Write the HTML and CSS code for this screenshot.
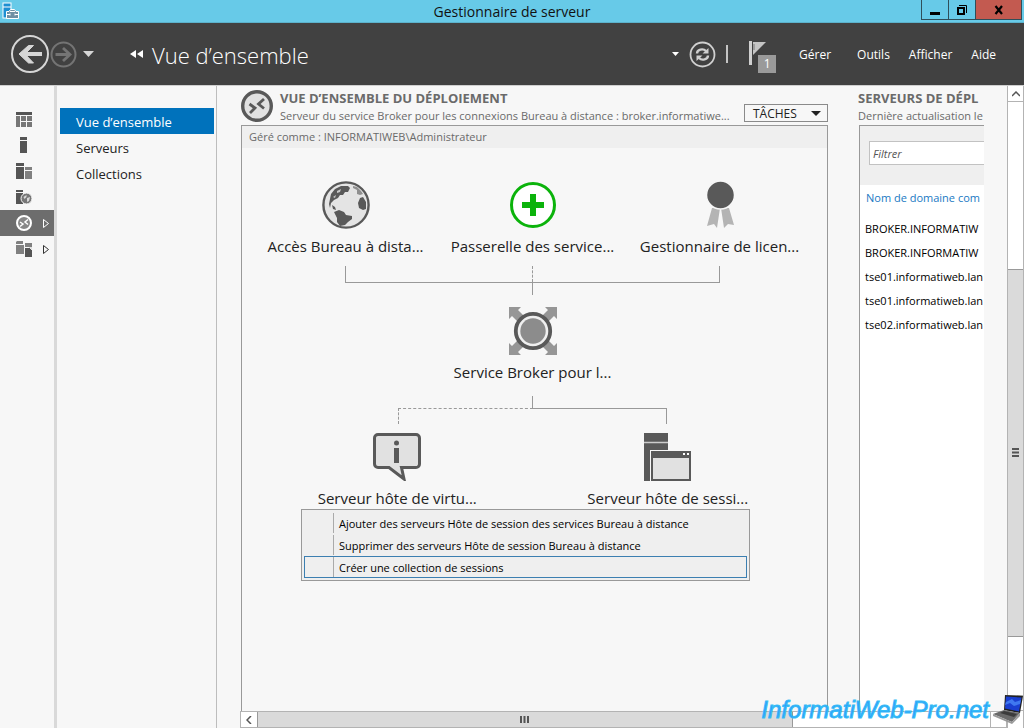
FILE: index.html
```html
<!DOCTYPE html>
<html lang="fr">
<head>
    <meta charset="UTF-8">
    <meta name="viewport" content="width=device-width, initial-scale=1.0">
    <title>Gestionnaire de serveur</title>
    <link rel="stylesheet" href="styles.css">
</head>
<body>
    <header class="titlebar">
        <svg class="app-icon" width="18" height="18" viewBox="0 0 18 18">
            <rect x="1" y="1" width="8" height="15" fill="#1b8fd2" stroke="#fff"/>
            <path d="M1 5h8" stroke="#fff"/>
            <path d="M4.500 9.500h2.500l1.500-2h4l1.500 2h2.500v7h-12z" fill="#6f8fa3" stroke="#fff"/>
            <path d="M5 12.500h3m5 0h3M8 11.500v2m5-2v2M8 9.500h5" stroke="#fff"/>
        </svg>
        <h1>Gestionnaire de serveur</h1>
        <div class="window-controls">
            <button class="win-btn" aria-label="Réduire">
                <svg width="12" height="12" viewBox="0 0 12 12"><path d="M1 9.500h10" stroke="#000" stroke-width="3"/></svg>
            </button>
            <button class="win-btn" aria-label="Agrandir">
                <svg width="12" height="12" viewBox="0 0 12 12" fill="none" stroke="#000"><path d="M3 1.500h7.500V9"/><rect x="2" y="4" width="6" height="6" stroke-width="2"/></svg>
            </button>
            <button class="win-btn close" aria-label="Fermer">
                <svg width="12" height="12" viewBox="0 0 12 12"><path d="M2.500 2l6.500 8M9 2l-6.500 8" stroke="#000" stroke-width="2.200"/></svg>
            </button>
        </div>
    </header>

    <div class="toolbar">
        <div class="history">
            <button aria-label="Précédent">
                <svg width="40" height="40" viewBox="0 0 40 40" fill="none" stroke="#d6d6d6">
                    <circle cx="20" cy="20" r="18" stroke-width="2"/>
                    <path d="M32 20H11" stroke-width="4"/>
                    <path d="M18.500 11.500h5l-8.500 8.500 8.500 9h-5l-9.500-9z" fill="#d6d6d6" stroke-width="1"/>
                </svg>
            </button>
            <button aria-label="Suivant">
                <svg width="27" height="27" viewBox="0 0 27 27" fill="none" stroke="#747474">
                    <circle cx="13.500" cy="13.500" r="12" stroke-width="2"/>
                    <path d="M5.500 13.500H20M13 7l7 6.500-7 6.500" stroke-width="2.800"/>
                </svg>
            </button>
            <button class="history-more" aria-label="Historique">
                <svg width="11" height="6" viewBox="0 0 11 6"><path d="M0 0h11L5.500 6z" fill="#d6d6d6"/></svg>
            </button>
        </div>
        <div class="breadcrumb">
            <svg width="14" height="8" viewBox="0 0 14 8"><path d="M6 0v8L0 4zM13 0v8L7 4z" fill="#fff"/></svg>
            <h2>Vue d’ensemble</h2>
        </div>
        <div class="actions">
            <svg width="7" height="4" viewBox="0 0 7 4"><path d="M0 0h7L3.500 4z" fill="#fff"/></svg>
            <button class="refresh" aria-label="Actualiser">
                <svg width="27" height="27" viewBox="0 0 27 27" fill="none" stroke="#d0d0d0">
                    <circle cx="13.500" cy="13.500" r="12" stroke-width="1.800"/>
                    <path d="M8 12.500c0-4 6-5.500 9-2.500M19 14.500c0 4-6 5.500-9 2.500" stroke-width="2.400"/>
                    <path d="M19.500 7v5.500h-6zM7.500 20v-5.500h6z" fill="#d0d0d0" stroke="none"/>
                </svg>
            </button>
            <span class="divider"></span>
            <button class="flag" aria-label="Notifications">
                <svg width="20" height="26" viewBox="0 0 20 26"><path d="M0 0h3v24H0z" fill="#d0d0d0"/><path d="M4 1h13L4 14z" fill="#c4c4c4"/><path d="M5 3v6" stroke="#777"/></svg>
                <span class="badge">1</span>
            </button>
            <nav class="menus">
                <button class="menu-manage">Gérer</button>
                <button>Outils</button>
                <button>Afficher</button>
                <button>Aide</button>
            </nav>
        </div>
    </div>

    <div class="workspace">
        <nav class="rail">
            <a href="#" aria-label="Tableau de bord">
                <svg width="16" height="16" viewBox="0 0 16 16"><path d="M0 1h16v3H0z" fill="#555"/><path d="M0 5h4v11H0zM5 5h5v5H5zM11 5h5v5h-5zM5 11h5v5H5zM11 11h5v5h-5z" fill="#777"/></svg>
            </a>
            <a href="#" aria-label="Serveur local">
                <svg width="16" height="16" viewBox="0 0 16 16"><path d="M4 0h7v3H4zM4 4h7v12H4z" fill="#555"/></svg>
            </a>
            <a href="#" aria-label="Tous les serveurs">
                <svg width="16" height="16" viewBox="0 0 16 16"><path d="M0 0h8v3H0zM0 4h8v12H0z" fill="#555"/><path d="M9 4h7v3H9zM9 8h7v8H9z" fill="#808080"/></svg>
            </a>
            <a href="#" aria-label="IIS">
                <svg width="16" height="16" viewBox="0 0 16 16"><path d="M0 1h7v2H0zM0 4h7v11H0z" fill="#555"/><circle cx="10.500" cy="9.500" r="5.500" fill="#777" stroke="#f7f7f7"/><path d="M7.500 8l3-2v2l-2 2zM11 9l3-1-1 4-2 1z" fill="#d8d8d8"/></svg>
            </a>
            <a href="#" class="active" aria-label="Services Bureau à distance">
                <svg width="16" height="16" viewBox="0 0 16 16" fill="none" stroke="#fff"><circle cx="8" cy="8" r="7" fill="#888" stroke-width="2"/><path d="M4 7l3 2-3 2.500M12 4.500L9 7l3 2.500" stroke-width="1.500"/></svg>
                <svg class="expand" width="6" height="9" viewBox="0 0 6 9"><path d="M.5.5v8l5-4z" fill="none" stroke="#fff"/></svg>
            </a>
            <a href="#" aria-label="Services de fichiers">
                <svg width="16" height="16" viewBox="0 0 16 16"><path d="M0 1l1-1h6v3H0zM0 4h8v9H0zM9 2h7v11H9z" fill="#808080"/><path d="M8.500 6.500h5l3 3v7h-8z" fill="#555" stroke="#f7f7f7"/><path d="M13 6h3v3z" fill="#ddd"/></svg>
                <svg class="expand" width="6" height="9" viewBox="0 0 6 9"><path d="M.5.5v8l5-4z" fill="none" stroke="#333"/></svg>
            </a>
        </nav>

        <nav class="sidenav">
            <a href="#" class="active">Vue d’ensemble</a>
            <a href="#">Serveurs</a>
            <a href="#">Collections</a>
        </nav>

        <main class="content">
            <div class="tiles">
                <section class="tile deployment">
                    <div class="tile-head">
                        <svg width="32" height="32" viewBox="0 0 32 32" fill="none" stroke="#595959"><circle cx="16" cy="16" r="14.300" fill="#e1e1e1" stroke-width="3.400"/><path d="M8.500 14l5.500 4-5 5M23 9l-5.500 5 5.500 4.500" stroke-width="2.800"/></svg>
                        <div class="tile-title">
                            <h3>VUE D’ENSEMBLE DU DÉPLOIEMENT</h3>
                            <p>Serveur du service Broker pour les connexions Bureau à distance : broker.informatiwe...</p>
                        </div>
                        <button class="tasks">TÂCHES
                            <svg width="10" height="5" viewBox="0 0 10 5"><path d="M0 0h10L5 5z" fill="#222"/></svg>
                        </button>
                    </div>
                    <div class="panel">
                        <p class="managed">Géré comme : INFORMATIWEB\Administrateur</p>
                        <div class="diagram">
                            <div class="row three">
                                <div class="node">
                                    <svg width="48" height="48" viewBox="0 0 48 48">
                                        <circle cx="24" cy="24" r="22.600" fill="#e4e4e4" stroke="#595959" stroke-width="2.400"/>
                                        <path d="M8 18l1-5 4-5 6-3 7 0 2 2-2 4-3 0-2 3-3 0-2 3-4 2-3 3-1 5-1-4z" fill="#595959"/>
                                        <path d="M10 24l3 2 1 3-3-1zM12 31l5-2 5 2 2 3 6 1 0 3-4 3-3 3-5 1-3-4 0-4z" fill="#595959"/>
                                        <path d="M38 17l3-1 3 5 0 7-3 1-4-2-1-5z" fill="#595959"/>
                                        <path d="M31 5l4 1 4 4 2 3-3 1-3-1 0-4-4-2z" fill="#8f8f8f"/>
                                        <path d="M15 10l4-2-1 3-3 1zM11 16l3-2-1 3z" fill="#c8c8c8"/>
                                    </svg>
                                    <span>Accès Bureau à dista...</span>
                                </div>
                                <div class="node">
                                    <svg width="48" height="48" viewBox="0 0 48 48"><circle cx="24" cy="24" r="21.500" fill="#fff" stroke="#0bb30b" stroke-width="3"/><path d="M24 13v22M13 24h22" stroke="#0bb30b" stroke-width="6"/></svg>
                                    <span>Passerelle des service...</span>
                                </div>
                                <div class="node">
                                    <svg width="48" height="48" viewBox="0 0 48 48"><path d="M16 27h8l-3 20-3-4-7 2zM25 27h8l5 17-6-1-4 4z" fill="#b4b4b4"/><circle cx="24.500" cy="14" r="14" fill="#595959" stroke="#f7f7f7" stroke-width="1.500"/></svg>
                                    <span>Gestionnaire de licen...</span>
                                </div>
                            </div>
                            <div class="join"><span></span></div>
                            <div class="stem"></div>
                            <div class="row">
                                <div class="node">
                                    <svg width="48" height="48" viewBox="0 0 48 48">
                                        <path d="M0 0h12L9 3l8 8-6 6-8-8-3 3zM48 0v12l-3-3-8 8-6-6 8-8-3-3zM0 48V36l3 3 8-8 6 6-8 8 3 3zM48 48H36l3-3-8-8 6-6 8 8 3-3z" fill="#969696"/>
                                        <circle cx="24" cy="24" r="17.200" fill="#efefef" stroke="#595959" stroke-width="3.800"/>
                                        <circle cx="24" cy="24" r="12.700" fill="#8c8c8c"/>
                                    </svg>
                                    <span>Service Broker pour l...</span>
                                </div>
                            </div>
                            <div class="stem"></div>
                            <div class="fork"><span class="optional"></span><span></span></div>
                            <div class="row two">
                                <div class="node">
                                    <svg width="48" height="48" viewBox="0 0 48 48">
                                        <path d="M5 1.500h38a3.500 3.500 0 013.500 3.500v26a3.500 3.500 0 01-3.500 3.500H28.500L31 46 16 34.500H5A3.500 3.500 0 011.500 31V5A3.500 3.500 0 015 1.500z" fill="#e1e1e1" stroke="#595959" stroke-width="3"/>
                                        <circle cx="23.500" cy="10" r="2.500" fill="#595959"/><path d="M21 15h5v15h-5z" fill="#595959"/>
                                    </svg>
                                    <span>Serveur hôte de virtu...</span>
                                </div>
                                <div class="node">
                                    <svg width="48" height="48" viewBox="0 0 48 48">
                                        <path d="M0 0h24v48H0z" fill="#595959"/><path d="M0 9.500h24" stroke="#ccc" stroke-width="1.500"/>
                                        <path d="M6 17h42v31H6z" fill="#f7f7f7"/><path d="M7 18h40v30H7z" fill="#595959"/><path d="M9 25h36v21H9z" fill="#e1e1e1"/><path d="M39 20h2v2h-2zM43 20h2v2h-2z" fill="#fff"/>
                                    </svg>
                                    <span>Serveur hôte de sessi...</span>
                                </div>
                            </div>
                            <div class="context-menu" role="menu">
                                <button role="menuitem"><span>Ajouter des serveurs Hôte de session des services Bureau à distance</span></button>
                                <button role="menuitem"><span>Supprimer des serveurs Hôte de session Bureau à distance</span></button>
                                <button role="menuitem" class="focused"><span>Créer une collection de sessions</span></button>
                            </div>
                        </div>
                    </div>
                </section>

                <section class="tile servers">
                    <div class="tile-head">
                        <div class="tile-title">
                            <h3>SERVEURS DE DÉPL</h3>
                            <p>Dernière actualisation le</p>
                        </div>
                    </div>
                    <div class="server-panel">
                        <div class="filter">
                            <input type="text" placeholder="Filtrer" aria-label="Filtrer">
                        </div>
                        <table>
                            <thead>
                                <tr><th>Nom de domaine com</th></tr>
                            </thead>
                            <tbody>
                                <tr><td>BROKER.INFORMATIW</td></tr>
                                <tr><td>BROKER.INFORMATIW</td></tr>
                                <tr><td>tse01.informatiweb.lan</td></tr>
                                <tr><td>tse01.informatiweb.lan</td></tr>
                                <tr><td>tse02.informatiweb.lan</td></tr>
                            </tbody>
                        </table>
                    </div>
                </section>
            </div>

            <div class="hscroll">
                <button aria-label="Gauche"><svg width="6" height="8" viewBox="0 0 6 8"><path d="M5 0L1 4l4 4" fill="none" stroke="#555" stroke-width="1.500"/></svg></button>
                <div class="thumb"><svg width="9" height="7" viewBox="0 0 9 7"><path d="M1 0v7M4.500 0v7M8 0v7" stroke="#555" stroke-width="2"/></svg></div>
                <div class="rest"></div>
                <button aria-label="Droite"></button>
            </div>
        </main>

        <div class="vscroll">
            <button aria-label="Haut"><svg width="8" height="6" viewBox="0 0 8 6"><path d="M0 5l4-4 4 4" fill="none" stroke="#555" stroke-width="1.500"/></svg></button>
            <div class="before"></div>
            <div class="thumb"><svg width="7" height="9" viewBox="0 0 7 9"><path d="M0 1h7M0 4.500h7M0 8h7" stroke="#555" stroke-width="2"/></svg></div>
            <div class="after"></div>
            <button aria-label="Bas"></button>
        </div>
    </div>

    <div class="watermark">
        <span>InformatiWeb-Pro.net</span>
        <svg width="32" height="30" viewBox="0 0 32 30">
            <path d="M13 0l18 1-3 17-16-3z" fill="#222"/>
            <path d="M14 1.500l15.500 1-2.500 14-14-3z" fill="#1a3fd0"/>
            <path d="M14 7l6-3 3 3 6-2-1 4-6 2-4-3-5 2z" fill="#3f78f0"/>
            <path d="M12 15l16 3-8 9L1 19z" fill="#6a6a6a"/>
            <path d="M12 16l13 3-3 3-14-4z" fill="#3b3b3b"/>
            <path d="M1 19l19 8v2L1 21zM28 18l-8 9v2l8-8z" fill="#999"/>
        </svg>
    </div>
</body>
</html>
```
FILE: styles.css
```css
* {
    margin: 0;
    padding: 0;
    box-sizing: border-box;
}

body {
    display: flex;
    flex-direction: column;
    min-height: 100vh;
    font-family: "Open Sans", "Noto Sans", sans-serif;
    font-size: 12px;
    color: #222;
    background: #f7f7f7;
    overflow-x: hidden;
    position: relative;
}

button {
    font: inherit;
    color: inherit;
    background: none;
    border: none;
    cursor: pointer;
}

a {
    color: inherit;
    text-decoration: none;
}

svg {
    display: block;
    flex: none;
}

/* Title bar */
.titlebar {
    display: grid;
    grid-template-columns: 1fr auto 1fr;
    height: 23px;
    background: #67cae8;
    border-bottom: 1px solid #5cb2cc;
}

.app-icon {
    margin: 2px 0 0 2px;
}

.titlebar h1 {
    font-size: 14px;
    font-weight: 400;
    line-height: 24px;
    color: #111;
}

.window-controls {
    display: flex;
    justify-self: end;
    height: 20px;
    margin-right: 2px;
    border: 1px solid #2f4f5a;
    border-top: none;
}

.win-btn {
    display: flex;
    align-items: center;
    justify-content: center;
    width: 27px;
    border-right: 1px solid #2f4f5a;
}

.win-btn.close {
    width: 45px;
    background: #c35a50;
    border-right: none;
}

/* Toolbar */
.toolbar {
    display: flex;
    align-items: center;
    height: 62px;
    background: #414141;
    color: #fff;
}

.history {
    display: flex;
    align-items: center;
    padding-left: 10px;
}

.history-more {
    margin-left: 6px;
}

.breadcrumb {
    display: flex;
    align-items: center;
    gap: 8px;
    margin-left: 36px;
}

.breadcrumb h2 {
    padding-top: 2px;
    font-size: 22px;
    font-weight: 300;
    line-height: 32px;
}

.actions {
    display: flex;
    align-items: center;
    margin-left: auto;
}

.refresh {
    margin: 0 10px;
}

.divider {
    width: 2px;
    height: 18px;
    background: #c4c4c4;
}

.flag {
    position: relative;
    height: 28px;
    width: 28px;
    margin-left: 21px;
}

.badge {
    position: absolute;
    left: 9px;
    top: 15px;
    width: 18px;
    height: 18px;
    background: #9a9a9a;
    line-height: 18px;
}

.menus {
    display: flex;
    gap: 19px;
    padding-right: 28px;
    margin-left: 22px;
}

.menu-manage {
    margin-right: 7px;
}

/* Workspace */
.workspace {
    display: flex;
    flex: 1;
    border-top: 1px solid #cfcfcf;
}

.rail {
    width: 57px;
    padding-top: 20px;
    border-right: 3px solid #d9d9d9;
}

.rail a {
    display: flex;
    align-items: center;
    height: 26px;
    padding-left: 16px;
}

.rail .active {
    background: #6d6d6d;
}

.expand {
    margin-left: 11px;
}

.sidenav {
    width: 160px;
    padding: 22px 2px 0 3px;
    border-right: 1px solid #bdbdbd;
}

.sidenav a {
    display: block;
    height: 26px;
    padding-left: 16px;
    font-size: 13px;
    line-height: 28px;
}

.sidenav .active {
    color: #fff;
    background: #0072bc;
}

.content {
    display: flex;
    flex: 1;
    flex-direction: column;
    min-width: 0;
    padding-left: 23px;
}

.tiles {
    display: flex;
    flex: 1;
    gap: 30px;
    padding: 0 23px 0 1px;
}

.tile {
    display: flex;
    flex-direction: column;
}

.deployment {
    flex: 1;
    min-width: 0;
}

.servers {
    flex: 0 0 126px;
    overflow: hidden;
    white-space: nowrap;
}

.tile-head {
    display: flex;
    align-items: flex-start;
    gap: 7px;
    height: 39px;
    padding-top: 4px;
    color: #6a6a6a;
}

.tile-title {
    flex: 1;
    min-width: 0;
    white-space: nowrap;
}

.tile-title h3 {
    font-size: 13px;
    line-height: 17px;
}

.tile-title p {
    font-size: 11px;
    line-height: 17px;
}

.tasks {
    display: flex;
    align-items: center;
    justify-content: space-between;
    align-self: flex-end;
    width: 84px;
    height: 18px;
    padding: 0 6px 0 8px;
    margin-bottom: 3px;
    border: 1px solid #8a8a8a;
    color: #222;
}

.panel {
    flex: 1;
    border: 1px solid #999;
    border-bottom: none;
}

.managed {
    padding-left: 7px;
    font-size: 11px;
    line-height: 22px;
    color: #6a6a6a;
    background: #efefef;
}

/* Deployment diagram */
.diagram {
    position: relative;
    padding: 33px 14px 0 10px;
}

.row {
    display: grid;
}

.three {
    grid-template-columns: repeat(3, 1fr);
}

.two {
    grid-template-columns: repeat(2, 1fr);
    padding: 0 10px;
}

.node {
    display: flex;
    flex-direction: column;
    align-items: center;
    gap: 6px;
    font-size: 15px;
    line-height: 22px;
    white-space: nowrap;
}

.join {
    display: flex;
    justify-content: center;
    height: 17px;
    margin: 9px 16.66% 0;
    border: 1px solid #999;
    border-top: none;
}

.join span {
    border-left: 1px dashed #999;
}

.stem {
    width: 1px;
    height: 12px;
    margin: 0 auto;
    background: #999;
}

.stem + .row {
    margin-top: 12px;
}

.row + .stem {
    margin-top: 13px;
}

.fork {
    display: flex;
    height: 16px;
    margin: 0 26% 9px;
}

.fork span {
    flex: 1;
    border-top: 1px solid #999;
    border-right: 1px solid #999;
}

.fork .optional {
    border-top-style: dashed;
    border-left: 1px dashed #999;
    border-right: none;
}

.context-menu {
    position: absolute;
    top: 361px;
    left: 59px;
    width: 449px;
    padding: 2px;
    border: 1px solid #999;
    font-size: 11px;
    background: #efefef;
}

.context-menu button {
    display: flex;
    width: 100%;
    height: 22px;
    padding-left: 28px;
    border: 1px solid transparent;
    color: #000;
}

.context-menu span {
    padding-left: 5px;
    border-left: 1px solid #aaa;
    line-height: 22px;
}

.context-menu .focused {
    border-color: #3c7fb1;
}

.context-menu .focused span {
    height: 20px;
}

/* Servers */
.server-panel {
    flex: 1;
    border-top: 1px solid #999;
    border-left: 1px solid #999;
    background: #fff;
    margin-left: 1px;
}

.filter {
    padding: 15px 0 20px 9px;
    background: #efefef;
}

.filter input {
    display: block;
    width: 180px;
    height: 24px;
    padding-left: 3px;
    border: 1px solid #c2c2c2;
    font: italic 11px "Open Sans", sans-serif;
    background: #fff;
}

.filter input::placeholder {
    color: #555;
}

table {
    border-collapse: collapse;
    font-size: 11px;
    color: #000;
}

th {
    height: 31px;
    padding: 0 0 7px 6px;
    font-weight: 400;
    text-align: left;
    color: #1979c3;
}

td {
    height: 24px;
    padding-left: 5px;
}

/* Scroll bars */
.hscroll,
.vscroll {
    display: flex;
    background: #fff;
}

.hscroll button,
.vscroll button,
.thumb {
    display: flex;
    align-items: center;
    justify-content: center;
}

.hscroll {
    height: 17px;
    border: 1px solid #b3b3b3;
}

.hscroll button {
    width: 16px;
}

.thumb {
    background: #dadada;
    border: 1px solid #999;
}

.hscroll .thumb {
    flex: 535;
    border-width: 0 1px;
}

.rest {
    flex: 198;
}

.hscroll button:last-child {
    border-left: 1px solid #b3b3b3;
}

.vscroll {
    flex-direction: column;
    width: 17px;
    padding-bottom: 17px;
    border-left: 1px solid #b3b3b3;
    border-right: 1px solid #b3b3b3;
}

.vscroll button {
    height: 16px;
    border-bottom: 1px solid #b3b3b3;
}

.before {
    flex: 167;
}

.vscroll .thumb {
    flex: 367;
    border-width: 1px 0;
}

.after {
    flex: 58;
}

.vscroll button:last-child {
    border-top: 1px solid #b3b3b3;
}

/* Watermark */
.watermark {
    position: absolute;
    right: 0;
    bottom: 0;
    display: flex;
    align-items: center;
    gap: 3px;
    font: italic 24px/36px "Liberation Sans", Arial, sans-serif;
    color: #2f9bff;
    -webkit-text-stroke: 1px #35bdf5;
}
```
